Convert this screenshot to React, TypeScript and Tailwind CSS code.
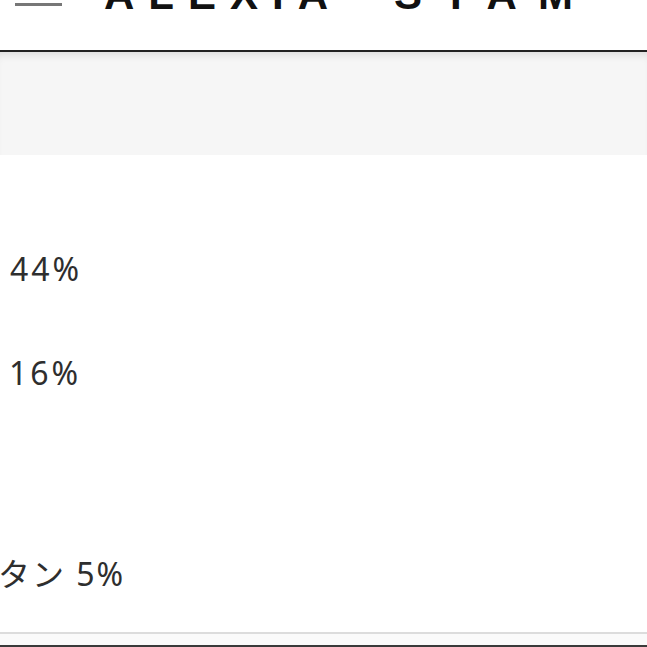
const lines = [
  { text: "44%", cls: "mt-[98px] pl-[10px] tracking-[3px]" },
  { text: "16%", cls: "mt-[73px] pl-[9px] tracking-[3px]" },
  { text: "タン 5%", cls: "mt-[170px] -ml-[2px] tracking-[2px]" },
]

export default function App() {
  return (
    <div className="w-[647px] h-[647px] overflow-hidden bg-white flex flex-col font-['Noto_Sans','Noto_Sans_CJK_JP',sans-serif]">
      {/* header, scrolled so only the bottom of the logo shows */}
      <header className="h-[50px] shrink-0 flex items-start overflow-hidden border-b-2 border-[#222] box-content">
        <div className="ml-[15px] -mt-[15px] flex flex-col gap-[6px]">
          <span className="block w-[47px] h-[3px] bg-[#777]" />
          <span className="block w-[47px] h-[3px] bg-[#777]" />
          <span className="block w-[47px] h-[3px] bg-[#777]" />
        </div>
        <div className="ml-[42px] -mt-[26px] flex text-[42px] leading-none font-bold text-[#111] font-['Liberation_Sans',sans-serif]">
          <span className="tracking-[14px]">ALEXIA</span>
          <span className="ml-[52px] tracking-[21px]">STAM</span>
        </div>
      </header>

      <div className="h-[103px] shrink-0 bg-[#f6f6f6] shadow-[inset_0_8px_10px_-6px_rgba(0,0,0,0.12)]" />

      <main className="flex-1 flex flex-col text-[32px] leading-[31px] text-[#2e2e2e]">
        {lines.map((l) => (
          <p key={l.text} className={`${l.cls} whitespace-nowrap`}>
            {l.text}
          </p>
        ))}
      </main>

      <footer className="shrink-0 flex flex-col">
        <div className="h-[2px] bg-[#dcdcdc]" />
        <div className="h-[11px] bg-[#fafafa]" />
        <div className="h-[2px] bg-[#3a3a3a]" />
      </footer>
    </div>
  )
}
